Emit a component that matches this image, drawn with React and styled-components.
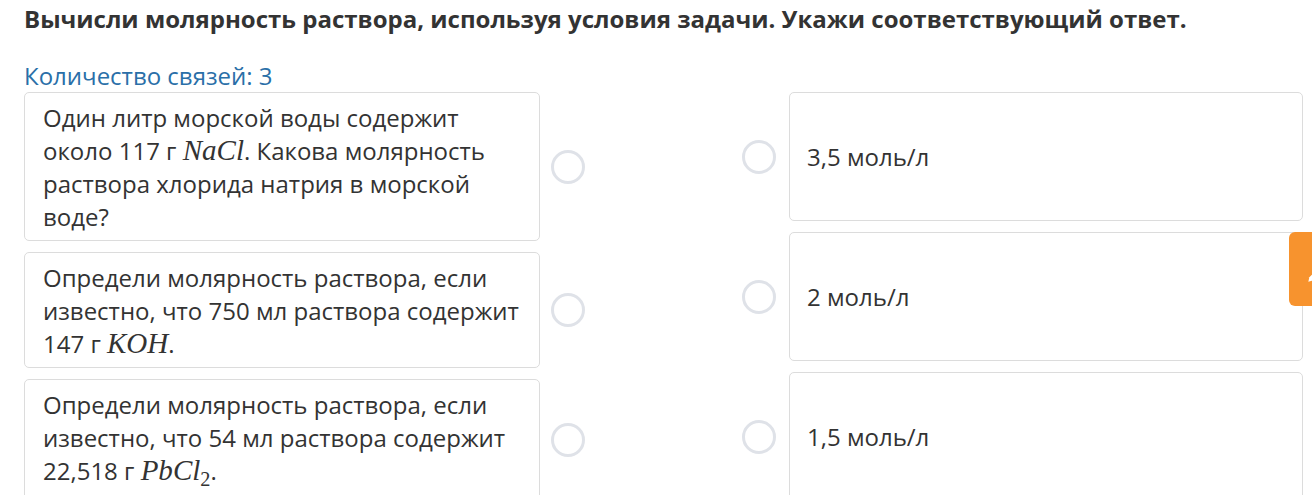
import React from "react";
import styled, { createGlobalStyle } from "styled-components";

const GlobalStyle = createGlobalStyle`
  body {
    margin: 0;
    background: #ffffff;
    font-family: "Open Sans", "Liberation Sans", sans-serif;
    color: #333333;
    overflow: hidden;
  }
`;

const Page = styled.div`
  padding: 0 9px 0 24px;
`;

const Title = styled.h1`
  margin: 0;
  padding-top: 2px;
  font-size: 24px;
  line-height: 33px;
  font-weight: 700;
  color: #333333;
`;

const Counter = styled.div`
  margin-top: 25px;
  font-size: 24px;
  line-height: 32px;
  color: #2a6fa8;
`;

const Board = styled.div`
  display: flex;
  justify-content: space-between;
  align-items: flex-start;
`;

const Column = styled.div`
  display: flex;
  flex-direction: column;
  gap: 11px;
`;

const Row = styled.div`
  display: flex;
  align-items: center;
  gap: ${(p) => (p.$right ? "13px" : "11px")};
`;

const Card = styled.div`
  box-sizing: border-box;
  width: ${(p) => (p.$right ? "514px" : "516px")};
  min-height: ${(p) => (p.$right ? "129px" : "auto")};
  padding: ${(p) => (p.$right ? "0 17px" : "8px 18px 7px")};
  display: flex;
  align-items: center;
  border: 1px solid #dcdcdc;
  border-radius: 5px;
  background: #ffffff;
  font-size: 24px;
  line-height: 33px;
  color: #333333;
`;

const Radio = styled.span`
  box-sizing: border-box;
  flex: none;
  width: 34px;
  height: 34px;
  border-radius: 50%;
  border: 3px solid #dfe2e8;
`;

const Formula = styled.span`
  font-family: "Liberation Serif", "DejaVu Serif", serif;
  font-style: italic;
  font-size: 1.21em;
  line-height: 1;
`;

const Sub = styled.sub`
  font-style: normal;
  font-size: 0.7em;
  vertical-align: -0.3em;
  line-height: 1.4;
`;

const SideTab = styled.div`
  position: fixed;
  top: 232px;
  left: 1289px;
  width: 40px;
  height: 74px;
  border-radius: 6px;
  background: #f7932e;
  display: flex;
  align-items: center;
  padding: 10px 0 0 16px;
  box-sizing: border-box;
`;

const questions = [
  <>
    Один литр морской воды содержит около 117 г <Formula>NaCl</Formula>. Какова
    молярность раствора хлорида натрия в морской воде?
  </>,
  <>
    Определи молярность раствора, если известно, что 750 мл раствора содержит
    147 г <Formula>KOH</Formula>.
  </>,
  <>
    Определи молярность раствора, если известно, что 54 мл раствора содержит
    22,518 г{" "}
    <Formula>
      PbCl<Sub>2</Sub>
    </Formula>
    .
  </>,
];

const answers = ["3,5 моль/л", "2 моль/л", "1,5 моль/л"];

export default function App() {
  return (
    <Page>
      <GlobalStyle />
      <Title>
        Вычисли молярность раствора, используя условия задачи. Укажи
        соответствующий ответ.
      </Title>
      <Counter>Количество связей: 3</Counter>
      <Board>
        <Column>
          {questions.map((q, i) => (
            <Row key={i}>
              <Card>
                <div>{q}</div>
              </Card>
              <Radio />
            </Row>
          ))}
        </Column>
        <Column>
          {answers.map((a) => (
            <Row key={a} $right>
              <Radio />
              <Card $right>{a}</Card>
            </Row>
          ))}
        </Column>
      </Board>
      <SideTab>
        <svg width="22" height="22" viewBox="0 0 20 20">
          <path d="M14 3 L4 13 L3 17 L7 16 L17 6 Z" fill="#ffffff" />
        </svg>
      </SideTab>
    </Page>
  );
}
